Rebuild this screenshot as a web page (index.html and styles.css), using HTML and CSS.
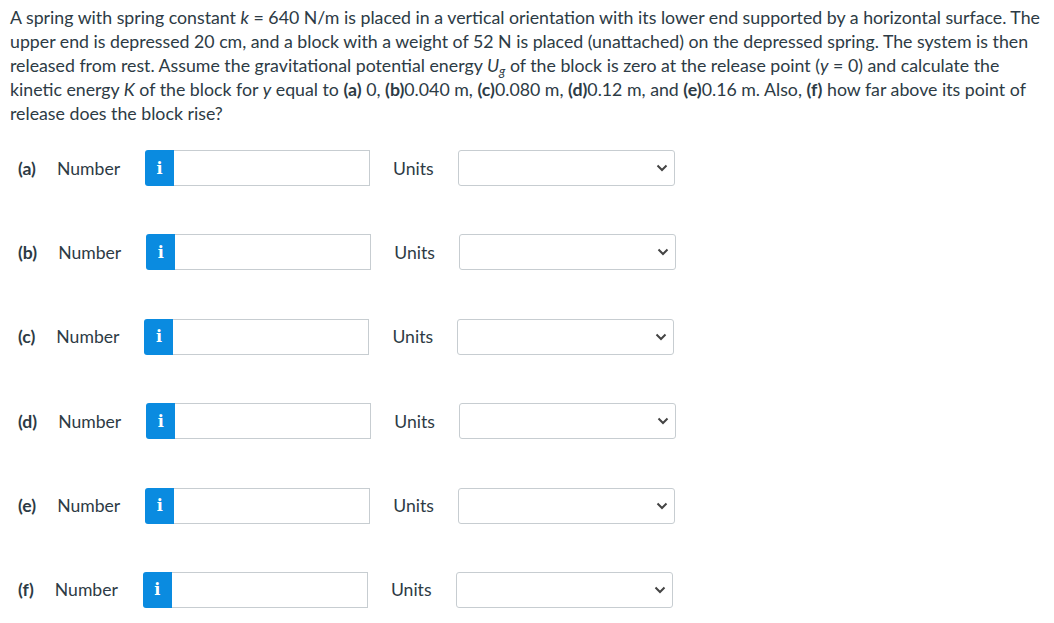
FILE: index.html
```html
<!DOCTYPE html>
<html>
<head>
<meta charset="utf-8">
<link rel="stylesheet" href="styles.css">
</head>
<body>
<div class="page">
<p class="question">A spring with spring constant <i>k</i> = 640 N/m is placed in a vertical orientation with its lower end supported by a horizontal surface. The upper end is depressed 20 cm, and a block with a weight of 52 N is placed (unattached) on the depressed spring. The system is then released from rest. Assume the gravitational potential energy <i>U<sub>g</sub></i> of the block is zero at the release point (<i>y</i> = 0) and calculate the kinetic energy <i>K</i> of the block for <i>y</i> equal to <b>(a)</b> 0, <b>(b)</b>0.040 m, <b>(c)</b>0.080 m, <b>(d)</b>0.12 m, and <b>(e)</b>0.16 m. Also, <b>(f)</b> how far above its point of release does the block rise?</p>

<div class="rows">
  <div class="row">
    <span class="part">(a)</span><span class="num">Number</span>
    <span class="badge">i</span><span class="input"></span>
    <span class="units">Units</span>
    <span class="select"><svg width="12" height="8" viewBox="0 0 12 8"><path d="M1.5 1.5 L6 6 L10.5 1.5" fill="none" stroke="#444" stroke-width="2"/></svg></span>
  </div>
  <div class="row">
    <span class="part">(b)</span><span class="num">Number</span>
    <span class="badge">i</span><span class="input"></span>
    <span class="units">Units</span>
    <span class="select"><svg width="12" height="8" viewBox="0 0 12 8"><path d="M1.5 1.5 L6 6 L10.5 1.5" fill="none" stroke="#444" stroke-width="2"/></svg></span>
  </div>
  <div class="row">
    <span class="part">(c)</span><span class="num">Number</span>
    <span class="badge">i</span><span class="input"></span>
    <span class="units">Units</span>
    <span class="select"><svg width="12" height="8" viewBox="0 0 12 8"><path d="M1.5 1.5 L6 6 L10.5 1.5" fill="none" stroke="#444" stroke-width="2"/></svg></span>
  </div>
  <div class="row">
    <span class="part">(d)</span><span class="num">Number</span>
    <span class="badge">i</span><span class="input"></span>
    <span class="units">Units</span>
    <span class="select"><svg width="12" height="8" viewBox="0 0 12 8"><path d="M1.5 1.5 L6 6 L10.5 1.5" fill="none" stroke="#444" stroke-width="2"/></svg></span>
  </div>
  <div class="row">
    <span class="part">(e)</span><span class="num">Number</span>
    <span class="badge">i</span><span class="input"></span>
    <span class="units">Units</span>
    <span class="select"><svg width="12" height="8" viewBox="0 0 12 8"><path d="M1.5 1.5 L6 6 L10.5 1.5" fill="none" stroke="#444" stroke-width="2"/></svg></span>
  </div>
  <div class="row">
    <span class="part">(f)</span><span class="num">Number</span>
    <span class="badge">i</span><span class="input"></span>
    <span class="units">Units</span>
    <span class="select"><svg width="12" height="8" viewBox="0 0 12 8"><path d="M1.5 1.5 L6 6 L10.5 1.5" fill="none" stroke="#444" stroke-width="2"/></svg></span>
  </div>
</div>
</div>
</body>
</html>
```

FILE: styles.css
```css
html, body {
  margin: 0;
  padding: 0;
  background: #fff;
}
.page {
  font-family: Lato, "Open Sans", sans-serif;
  font-size: 17.6px;
  color: #2d3b45;
  padding: 5px 10px 0 10px;
  width: 1036px;
}
.question {
  margin: 0;
  line-height: 24px;
  font-size: 17.75px;
}
.question i {
  font-style: italic;
}
.question sub {
  font-size: 13px;
  line-height: 0;
  vertical-align: -4px;
}
.question b {
  font-weight: 700;
}
.rows {
  display: flex;
  flex-direction: column;
  gap: 48.4px;
  margin-top: 25px;
}
.row {
  display: flex;
  align-items: center;
  height: 36px;
  padding-left: 8px;
  color: #2d3b45;
}
.part {
  font-weight: 700;
  margin-right: 21px;
}
.num {
  margin-right: 25px;
}
.badge {
  width: 29px;
  height: 36px;
  background: #0a8be0;
  border-radius: 3px 0 0 3px;
  color: #fff;
  font-family: "DejaVu Serif", serif;
  font-weight: 700;
  font-size: 16px;
  display: flex;
  align-items: center;
  justify-content: center;
}
.input {
  width: 195px;
  height: 34px;
  border: 1px solid #c7cdd1;
  border-left: none;
  background: #fff;
}
.units {
  margin-left: 23px;
  margin-right: 24px;
}
.select {
  width: 215px;
  height: 34px;
  border: 1px solid #c7cdd1;
  border-radius: 3px;
  background: #fff;
  display: flex;
  align-items: center;
  justify-content: flex-end;
}
.select svg {
  margin-right: 6px;
}
```
